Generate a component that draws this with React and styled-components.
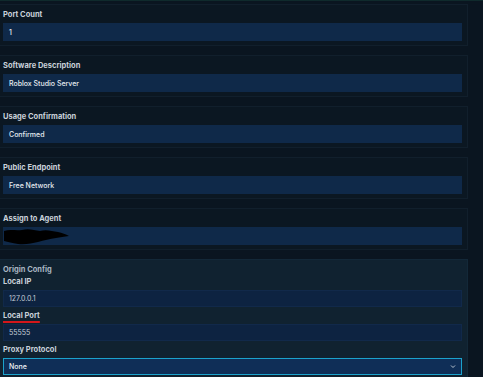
import React from 'react';
import styled, { createGlobalStyle } from 'styled-components';

const GlobalStyle = createGlobalStyle`
    html, body {
        margin: 0;
        padding: 0;
        background: #09131c;
        font-family: Inter, "Noto Sans", sans-serif;
        overflow: hidden;
    }
`

const Page = styled.div`
    width: 483px;
    height: 377px;
    overflow: hidden;
    padding-top: 3px;
    box-sizing: border-box;
    background: #0a1520;
    border-top: 1px solid #0f2a2c;
`

const Column = styled.div`
    width: 468px;
    display: flex;
    flex-direction: column;
    gap: 9px;
`

const Card = styled.div`
    background: ${p => p.$group ? '#102230' : '#0b1722'};
    border: 1px solid ${p => p.$group ? '#132838' : '#111f2c'};
    border-left: none;
    padding: ${p => p.$group ? '5px 3px 6px 3px' : '5px 3px 4px 3px'};
    display: flex;
    flex-direction: column;
`

const Label = styled.div`
    font-size: 7.5px;
    line-height: 10px;
    font-weight: 700;
    color: ${p => p.$muted ? '#a9b6c2' : '#c9d1da'};
    margin-bottom: ${p => p.$tight ? '2px' : '3px'};
`

const Marked = styled.span`
    text-decoration: underline;
    text-decoration-color: #d4161b;
    text-decoration-thickness: 1.5px;
    text-underline-offset: 3px;
`

const Field = styled.div`
    height: ${p => p.$inner ? '17px' : '18px'};
    box-sizing: border-box;
    margin-right: 2px;
    padding: 0 5px;
    display: flex;
    align-items: center;
    justify-content: space-between;
    font-size: 7px;
    font-weight: ${p => p.$inner ? 400 : 500};
    color: ${p => p.$inner ? '#c3ccd6' : '#e6ebf0'};
    background: ${p => p.$inner ? '#0d2341' : '#0f2949'};
    border: 1px solid ${p => p.$inner ? '#11294a' : '#0f2949'};
    margin-bottom: ${p => p.$inner ? '4px' : '0'};
`

const Select = styled(Field)`
    background: #0f2e57;
    border: 1.5px solid #1ba2cc;
    color: #eef2f6;
    font-weight: 500;
`

function Chevron() {
    return (
        <svg width="6" height="5" viewBox="0 0 6 5">
            <path d="M1 1.5 L3 3.5 L5 1.5" stroke="#b9c4cf" strokeWidth="1" fill="none" />
        </svg>
    );
}

function Redacted() {
    return (
        <svg width="66" height="17" viewBox="0 0 66 17" style={{ marginLeft: '-5px' }}>
            <path d="M0 3 C6 1 12 3 18 2 C24 0 30 2 36 3 C42 1 48 3 54 4 C58 5 62 6 65 8 C60 9 56 9 52 10 C46 11 40 12 34 14 C28 15 22 17 14 16 C8 15 4 14 0 13 Z" fill="#000" />
        </svg>
    );
}

const simple = [
    ['Port Count', '1'],
    ['Software Description', 'Roblox Studio Server'],
    ['Usage Confirmation', 'Confirmed'],
    ['Public Endpoint', 'Free Network'],
];

export default function App() {
    return (
        <Page>
            <GlobalStyle />
            <Column>
                {simple.map(([label, value]) => (
                    <Card key={label}>
                        <Label>{label}</Label>
                        <Field>{value}</Field>
                    </Card>
                ))}
                <Card>
                    <Label>Assign to Agent</Label>
                    <Field><Redacted /></Field>
                </Card>
                <Card $group>
                    <Label $muted $tight>Origin Config</Label>
                    <Label>Local IP</Label>
                    <Field $inner>127.0.0.1</Field>
                    <Label><Marked>Local Port</Marked></Label>
                    <Field $inner>55555</Field>
                    <Label>Proxy Protocol</Label>
                    <Select $inner>None<Chevron /></Select>
                </Card>
            </Column>
        </Page>
    );
}
